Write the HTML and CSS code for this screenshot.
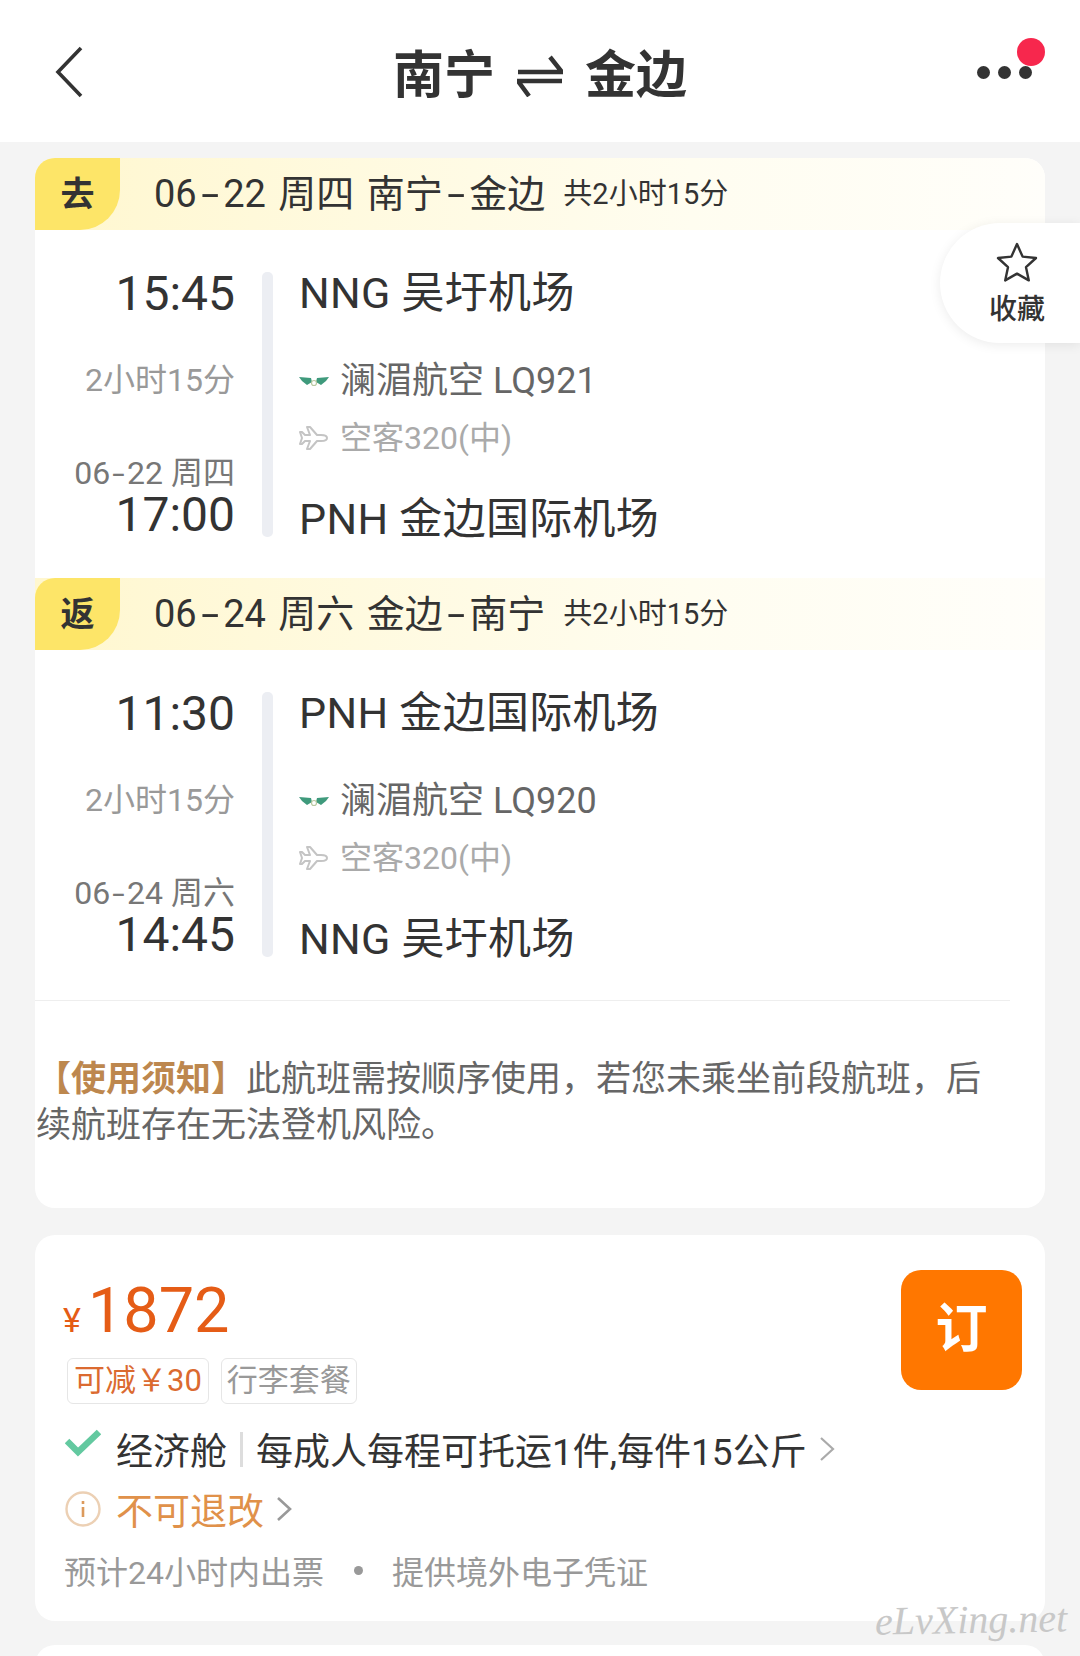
FILE: index.html
```html
<!DOCTYPE html>
<html lang="zh">

<head>
    <meta charset="UTF-8">
    <title>南宁 金边</title>
    <link rel="stylesheet" href="styles.css">
</head>

<body>
    <div class="nav">
        <svg class="back" width="28" height="52" viewBox="0 0 28 52">
            <path d="M26 2 L3 26 L26 50" fill="none" stroke="#333" stroke-width="3.6" />
        </svg>
        <div class="nav-title">
            <span>南宁</span>
            <svg width="46" height="42" viewBox="0 0 46 42">
                <path d="M1 17 H45 L33 2" fill="none" stroke="#333" stroke-width="4.5" />
                <path d="M45 26 H1 L12 41" fill="none" stroke="#333" stroke-width="4.5" />
            </svg>
            <span>金边</span>
        </div>
        <div class="more">
            <i></i><i></i><i></i>
            <b class="red-dot"></b>
        </div>
    </div>

    <div class="page">
        <div class="card flights">
            <div class="fav">
                <svg width="42" height="40" viewBox="0 0 42 40">
                    <path d="M21 2 L26.6 14.6 L40 16 L30 25.2 L32.8 38.4 L21 31.6 L9.2 38.4 L12 25.2 L2 16 L15.4 14.6 Z" fill="none" stroke="#333" stroke-width="2.4" stroke-linejoin="round" />
                </svg>
                <span>收藏</span>
            </div>

            <div class="leg-head">
                <div class="leg-tag">去</div>
                <div class="leg-name">06<span class="dash">-</span>22 周四 南宁<span class="dash">-</span>金边</div>
                <div class="leg-total">共2小时15分</div>
            </div>
            <div class="leg">
                <div class="times">
                    <div class="time">15:45</div>
                    <div class="duration">2小时15分</div>
                    <div class="arrive-date">06<span class="dash">-</span>22 周四</div>
                    <div class="time">17:00</div>
                </div>
                <div class="bar"></div>
                <div class="info">
                    <div class="airport">NNG 吴圩机场</div>
                    <div class="airline">
                        <svg width="30" height="14" viewBox="0 0 30 14">
                            <path d="M0 3 L12 4 L13 8 L8 11 L3 7 Z M30 3 L18 4 L17 8 L22 11 L27 7 Z" fill="#3f9a7c" />
                            <circle cx="15" cy="9" r="2.5" fill="none" stroke="#b9c9a0" stroke-width="1.2" />
                        </svg>
                        <span>澜湄航空 LQ921</span>
                    </div>
                    <div class="plane">
                        <svg width="30" height="26" viewBox="0 0 30 26">
                            <path d="M28 13 C28 11 25 10 22 10 H18 L11 2 H8 L11 10 H6 L3 7 H1 L3 13 L1 19 H3 L6 16 H11 L8 24 H11 L18 16 H22 C25 16 28 15 28 13 Z" fill="none" stroke="#c4c4c4" stroke-width="2" stroke-linejoin="round" />
                        </svg>
                        <span>空客320(中)</span>
                    </div>
                    <div class="airport airport-end">PNH 金边国际机场</div>
                </div>
            </div>

            <div class="leg-head">
                <div class="leg-tag">返</div>
                <div class="leg-name">06<span class="dash">-</span>24 周六 金边<span class="dash">-</span>南宁</div>
                <div class="leg-total">共2小时15分</div>
            </div>
            <div class="leg">
                <div class="times">
                    <div class="time">11:30</div>
                    <div class="duration">2小时15分</div>
                    <div class="arrive-date">06<span class="dash">-</span>24 周六</div>
                    <div class="time">14:45</div>
                </div>
                <div class="bar"></div>
                <div class="info">
                    <div class="airport">PNH 金边国际机场</div>
                    <div class="airline">
                        <svg width="30" height="14" viewBox="0 0 30 14">
                            <path d="M0 3 L12 4 L13 8 L8 11 L3 7 Z M30 3 L18 4 L17 8 L22 11 L27 7 Z" fill="#3f9a7c" />
                            <circle cx="15" cy="9" r="2.5" fill="none" stroke="#b9c9a0" stroke-width="1.2" />
                        </svg>
                        <span>澜湄航空 LQ920</span>
                    </div>
                    <div class="plane">
                        <svg width="30" height="26" viewBox="0 0 30 26">
                            <path d="M28 13 C28 11 25 10 22 10 H18 L11 2 H8 L11 10 H6 L3 7 H1 L3 13 L1 19 H3 L6 16 H11 L8 24 H11 L18 16 H22 C25 16 28 15 28 13 Z" fill="none" stroke="#c4c4c4" stroke-width="2" stroke-linejoin="round" />
                        </svg>
                        <span>空客320(中)</span>
                    </div>
                    <div class="airport airport-end">NNG 吴圩机场</div>
                </div>
            </div>

            <div class="divider"></div>
            <div class="notice"><b>【使用须知】</b>此航班需按顺序使用，若您未乘坐前段航班，后续航班存在无法登机风险。</div>
        </div>

        <div class="card offer">
            <div class="offer-top">
                <div>
                    <div class="price"><small>¥</small>1872</div>
                    <div class="tags">
                        <span class="tag tag-off">可减￥30</span>
                        <span class="tag">行李套餐</span>
                    </div>
                </div>
                <div class="book">订</div>
            </div>
            <div class="row cabin">
                <svg width="36" height="28" viewBox="0 0 36 28">
                    <path d="M2 12 L13 23 L34 3" fill="none" stroke="#63c9a0" stroke-width="6.5" />
                </svg>
                <span>经济舱</span>
                <i class="sep"></i>
                <span>每成人每程可托运1件,每件15公斤</span>
                <svg class="chev" width="16" height="28" viewBox="0 0 16 28">
                    <path d="M2 3 L14 14 L2 25" fill="none" stroke="#aaa" stroke-width="2.2" />
                </svg>
            </div>
            <div class="row refund">
                <svg width="36" height="36" viewBox="0 0 36 36">
                    <circle cx="18" cy="18" r="16.5" fill="none" stroke="#ecd0b4" stroke-width="2.4" />
                    <path d="M18 10 V13 M18 16 V26" stroke="#dc9a5c" stroke-width="2.6" />
                </svg>
                <span>不可退改</span>
                <svg class="chev" width="16" height="28" viewBox="0 0 16 28">
                    <path d="M2 3 L14 14 L2 25" fill="none" stroke="#999" stroke-width="2.6" />
                </svg>
            </div>
            <div class="row issue">
                <span>预计24小时内出票</span>
                <i class="dot"></i>
                <span>提供境外电子凭证</span>
            </div>
        </div>

        <div class="card next"></div>
    </div>

    <div class="watermark">eLvXing.net</div>
</body>

</html>
```

FILE: styles.css
```css
html,
body {
    margin: 0;
    height: 1656px;
    overflow: hidden;
}

body {
    position: relative;
    background: #f4f4f4;
    font-family: Roboto, "Noto Sans CJK SC", sans-serif;
    color: #333;
}

.nav {
    position: relative;
    display: flex;
    align-items: center;
    justify-content: center;
    height: 142px;
    background: #fff;
}

.back {
    position: absolute;
    left: 55px;
    top: 46px;
}

.nav-title {
    display: flex;
    align-items: center;
    gap: 22px;
    font-size: 51px;
    font-weight: 700;
    line-height: 60px;
    margin-top: 10px;
}

.more {
    position: absolute;
    left: 977px;
    top: 66px;
    display: flex;
    gap: 8px;
}

.more i {
    width: 13px;
    height: 13px;
    border-radius: 50%;
    background: #333;
}

.red-dot {
    position: absolute;
    left: 40px;
    top: -28px;
    width: 28px;
    height: 28px;
    border-radius: 50%;
    background: #f7274d;
}

.page {
    padding: 16px 35px 0;
}

.card {
    background: #fff;
    border-radius: 20px;
}

.flights {
    position: relative;
    margin-bottom: 27px;
    padding-bottom: 59px;
}

.fav {
    position: absolute;
    top: 65px;
    right: -35px;
    width: 140px;
    height: 120px;
    box-sizing: border-box;
    padding: 19px 0 0 14px;
    display: flex;
    flex-direction: column;
    align-items: center;
    background: #fff;
    border-radius: 60px 0 0 60px;
    box-shadow: 0 2px 12px rgba(0, 0, 0, 0.08);
}

.fav span {
    font-size: 28px;
    font-weight: 500;
    line-height: 40px;
    margin-top: 8px;
}

.leg-head {
    display: flex;
    align-items: center;
    height: 72px;
    background: linear-gradient(90deg, #fff7cf, #fffdf0 65%, #fffefa);
}

.fav + .leg-head {
    border-radius: 20px 20px 0 0;
}

.leg-tag {
    width: 85px;
    height: 72px;
    margin-right: 34px;
    background: #fde568;
    border-radius: 20px 0 40px 0;
    font-size: 34px;
    font-weight: 700;
    line-height: 72px;
    text-align: center;
}

.leg-name {
    font-size: 38px;
    line-height: 72px;
    word-spacing: 3px;
}

.dash {
    display: inline-block;
    margin: 0 8px;
    transform: scaleX(1.7);
}

.leg-total {
    font-size: 29px;
    line-height: 72px;
    margin-left: 18px;
}

.leg {
    display: flex;
    align-items: flex-start;
    padding: 42px 0 41px;
    height: 265px;
}

.times {
    width: 200px;
    margin-top: 1px;
    text-align: right;
}

.time {
    font-size: 48px;
    line-height: 42px;
}

.duration {
    margin-top: 47px;
    font-size: 32px;
    line-height: 36px;
    color: #999;
}

.arrive-date {
    margin-top: 58px;
    font-size: 32px;
    line-height: 34px;
    color: #777;
}

.arrive-date .dash {
    margin: 0 4px;
    transform: scaleX(1.4);
}

.arrive-date + .time {
    line-height: 48px;
    margin-top: 1px;
}

.bar {
    width: 11px;
    height: 265px;
    margin: 0 26px 0 27px;
    background: #eceef3;
    border-radius: 5px;
}

.info {
    margin-top: 0;
}

.airport {
    font-size: 43px;
    line-height: 42px;
    letter-spacing: 0.3px;
}

.airport-end {
    margin-top: 40px;
}

.airline,
.plane {
    display: flex;
    align-items: center;
    gap: 11px;
    line-height: 40px;
}

.airline {
    margin-top: 47px;
    font-size: 36px;
    color: #666;
}

.plane {
    margin-top: 17px;
    font-size: 32px;
    color: #aaa;
}

.divider {
    height: 1px;
    margin: 2px 35px 0 0;
    background: #eee;
}

.notice {
    margin-top: 56px;
    padding: 0 30px 0 1px;
    font-size: 35px;
    line-height: 46px;
    color: #666;
}

.notice b {
    color: #bd874e;
}

.offer {
    height: 386px;
    box-sizing: border-box;
    padding: 35px 23px 0 28px;
    margin-bottom: 24px;
}

.offer-top {
    display: flex;
    justify-content: space-between;
    height: 140px;
}

.price {
    padding-top: 3px;
    font-size: 63px;
    line-height: 76px;
    color: #e55c16;
}

.price small {
    font-size: 34px;
    margin-right: 7px;
}

.tags {
    display: flex;
    gap: 12px;
    margin-top: 0;
    margin-left: 4px;
}

.tag {
    height: 46px;
    box-sizing: border-box;
    padding: 0 5px;
    border: 1px solid #e6e6e6;
    border-radius: 6px;
    font-size: 31px;
    line-height: 44px;
    color: #999;
}

.tag-off {
    padding: 0 6px;
    color: #db6a30;
}

.book {
    width: 121px;
    height: 120px;
    background: #ff7700;
    border-radius: 20px;
    color: #fff;
    font-size: 52px;
    font-weight: 700;
    line-height: 120px;
    text-align: center;
}

.row {
    display: flex;
    align-items: center;
}

.cabin {
    margin-top: 17px;
    height: 44px;
    font-size: 37px;
}

.cabin > svg:first-child {
    margin: 0 15px 12px 2px;
}

.sep {
    width: 3px;
    height: 35px;
    margin: 0 13px;
    background: #ddd;
}

.chev {
    margin-left: 12px;
}

.refund {
    margin-top: 16px;
    height: 44px;
    font-size: 37px;
    color: #e0914a;
}

.refund > svg:first-child {
    margin: 0 15px 0 2px;
}

.issue {
    margin-top: 17px;
    height: 44px;
    margin-left: 1px;
    font-size: 32px;
    color: #999;
}

.dot {
    width: 9px;
    height: 9px;
    margin: 0 29px 0 30px;
    border-radius: 50%;
    background: #999;
}

.next {
    height: 60px;
}

.watermark {
    position: absolute;
    left: 875px;
    top: 1598px;
    font-family: "Liberation Serif", serif;
    font-style: italic;
    font-size: 40px;
    line-height: 44px;
    color: #c8c8c8;
    transform: rotate(-1deg);
}
```
